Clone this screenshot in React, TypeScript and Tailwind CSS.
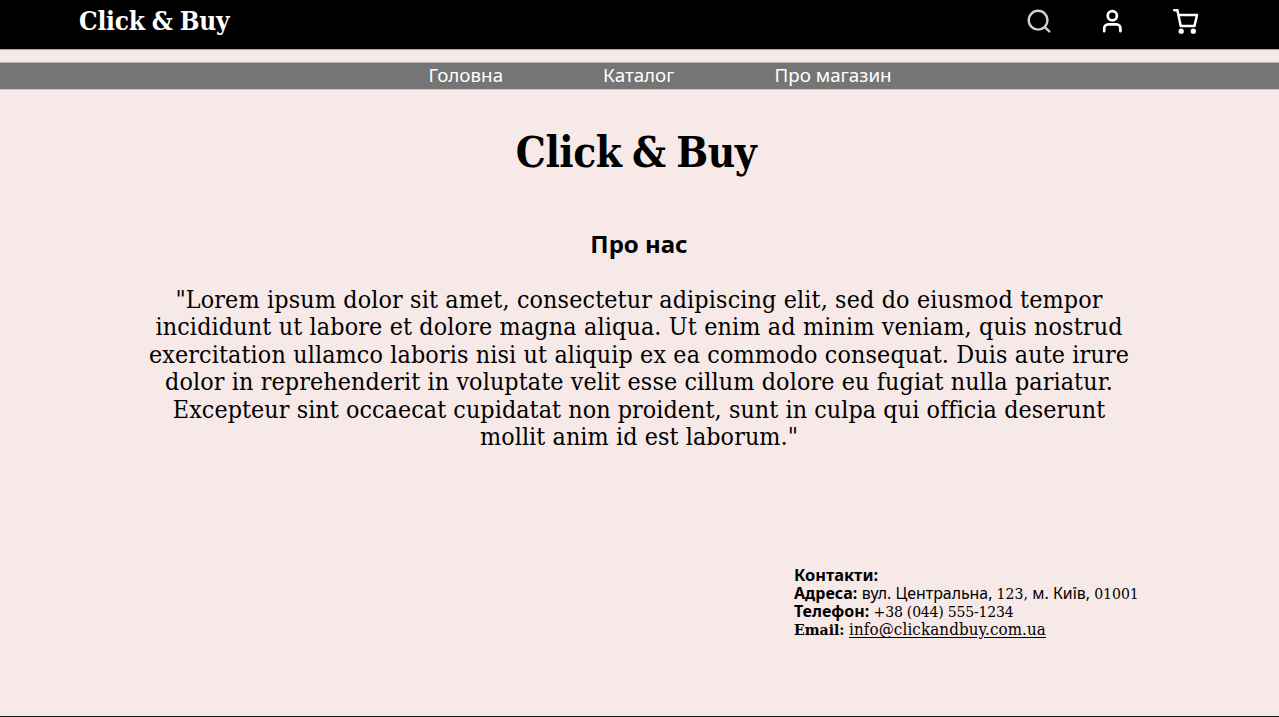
import React from "react";

const serif = "font-['DejaVu_Serif_Condensed','DejaVu_Serif',serif] [font-stretch:75%]";
const sans = "font-['Noto_Sans',sans-serif]";

const aboutLines = [
  { text: '"Lorem ipsum dolor sit amet, consectetur adipiscing elit, sed do eiusmod tempor', cls: "tracking-[0.14px]" },
  { text: "incididunt ut labore et dolore magna aliqua. Ut enim ad minim veniam, quis nostrud", cls: "tracking-[0.15px]" },
  { text: "exercitation ullamco laboris nisi ut aliquip ex ea commodo consequat. Duis aute irure", cls: "tracking-[0.13px]" },
  { text: "dolor in reprehenderit in voluptate velit esse cillum dolore eu fugiat nulla pariatur.", cls: "tracking-[0.11px]" },
  { text: "Excepteur sint occaecat cupidatat non proident, sunt in culpa qui officia deserunt", cls: "tracking-[0.07px]" },
  { text: 'mollit anim id est laborum."', cls: "tracking-[0.08px]" },
];

function Header() {
  return (
    <header className="flex h-[50px] items-start justify-between border-b border-[#aca6a5] bg-black pl-[79px] pr-[79px]">
      <div className={`${serif} mt-[5px] whitespace-nowrap text-[26px] leading-[32px] font-bold tracking-[-0.2px] [word-spacing:-1px] text-white`}>Click &amp; Buy</div>
      <div className="mt-[7px] flex items-center gap-[45px]">
        <svg width="28" height="28" viewBox="0 0 28 28" fill="none" stroke="#d0d0d0" strokeWidth="2.4" strokeLinecap="round">
          <circle cx="12.1" cy="13.2" r="9.4" />
          <path d="M19 20.3 23.3 24.4" />
        </svg>
        <svg width="28" height="28" viewBox="0 0 28 28" fill="none" stroke="#fff" strokeWidth="2.7" strokeLinecap="round">
          <circle cx="13.3" cy="8.7" r="4.6" />
          <path d="M5.2 24.2v-2.8a4 4 0 0 1 4-4h8.2a4 4 0 0 1 4 4v2.8" />
        </svg>
        <svg width="28" height="28" viewBox="0 0 28 28" fill="none" stroke="#fff" strokeWidth="2.5" strokeLinecap="round" strokeLinejoin="round">
          <path d="M2.2 3.2h3.2l3.3 15.7h13.8l2.5-10.9H6.4" />
          <circle cx="9.2" cy="24.2" r="1.4" />
          <circle cx="21.3" cy="24.2" r="1.4" />
        </svg>
      </div>
    </header>
  );
}

function Nav() {
  return (
    <nav className={`${sans} mt-[12px] flex h-[28px] justify-center gap-[100px] border-t border-b border-t-[#b8b2b1] border-b-[#cdc5c4] bg-[#757575] pl-[41px] text-[18.8px] leading-[25px] text-white`}>
      <a>Головна</a>
      <a>Каталог</a>
      <a>Про магазин</a>
    </nav>
  );
}

function Contacts() {
  return (
    <address className={`${serif} mt-[116px] ml-[794px] text-[15.6px] leading-[18px] not-italic whitespace-nowrap`}>
      <div className={`${sans} h-[18px] text-[16.4px] font-bold`}>Контакти:</div>
      <div className="h-[18px]">
        <b className={`${sans} text-[16px]`}>Адреса:</b> <span className={`${sans} text-[15.9px]`}>вул. Центральна, </span>123, <span className={`${sans} text-[15.9px]`}>м. Київ, </span>01001
      </div>
      <div className="h-[18px]">
        <b className={`${sans} text-[16px]`}>Телефон:</b> <span className="tracking-[-0.2px]">+38 (044) 555-1234</span>
      </div>
      <div className="h-[18px]">
        <b>Email:</b> <a className="text-[16.8px] tracking-[0.12px] underline underline-offset-2">info@clickandbuy.com.ua</a>
      </div>
    </address>
  );
}

export default function App() {
  return (
    <div className="flex h-[717px] flex-col overflow-hidden border-b border-[#1a1718] bg-[#f7e9e8] text-black">
      <Header />
      <Nav />
      <main>
        <h1 className={`${serif} mt-[36px] pr-[7px] text-center text-[42px] leading-[54px] font-bold tracking-[-0.5px] [word-spacing:-2px]`}>Click &amp; Buy</h1>
        <h2 className={`${sans} mt-[47px] pr-px text-center text-[24px] leading-[33px] font-bold`}>Про нас</h2>
        <div className={`${serif} mt-[26px] pr-px text-center text-[24.8px] leading-[27.4px] whitespace-nowrap`}>
          {aboutLines.map((line) => (
            <p key={line.text} className={line.cls}>{line.text}</p>
          ))}
        </div>
        <Contacts />
      </main>
    </div>
  );
}
